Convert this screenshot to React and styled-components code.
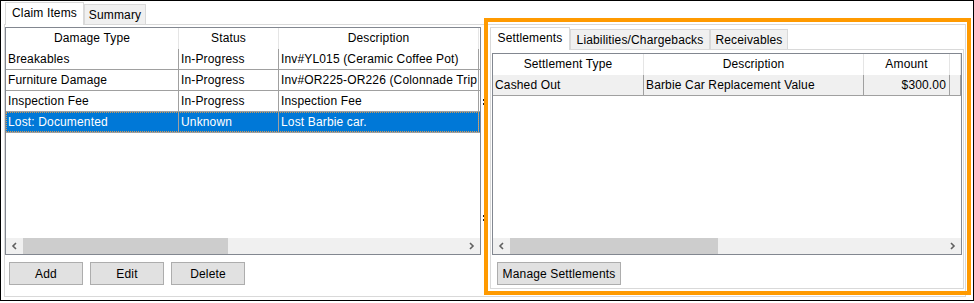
import React from "react";
import styled, { createGlobalStyle } from "styled-components";

const GlobalStyle = createGlobalStyle`
  html, body {
    margin: 0;
    padding: 0;
    background: #fff;
  }
  body {
    font-family: "Liberation Sans", Arial, sans-serif;
    font-size: 12px;
    letter-spacing: 0.15px;
    color: #000;
  }
  * {
    box-sizing: border-box;
  }
`;

const Frame = styled.div`
  width: 974px;
  height: 301px;
  border: 1px solid #000;
  padding: 0 7px 0 3px;
  background: #fff;
`;

const TabStrip = styled.div`
  display: flex;
  align-items: flex-end;
  height: ${(p) => p.$h}px;
  padding-left: ${(p) => p.$pl}px;
`;

const Tab = styled.div`
  position: relative;
  z-index: ${(p) => (p.$active ? 2 : 1)};
  width: ${(p) => p.$w}px;
  height: ${(p) => (p.$active ? 23 : 20)}px;
  margin-bottom: ${(p) => (p.$active ? -1 : 0)}px;
  padding: ${(p) => (p.$active ? "0 0 2px" : "1px 0 0")};
  display: flex;
  align-items: center;
  justify-content: center;
  border: 1px solid #d9d9d9;
  border-bottom: none;
  background: ${(p) => (p.$active ? "#fff" : "#f0f0f0")};
  white-space: nowrap;
`;

const TabPanel = styled.div`
  height: 273px;
  border: 1px solid #d9d9d9;
  display: flex;
`;

const LeftPane = styled.div`
  width: 476px;
  padding-top: 2px;
  display: flex;
  flex-direction: column;
`;

const Splitter = styled.div`
  width: 7px;
  padding-left: 2px;
  display: flex;
  flex-direction: column;
`;

const Grip = styled.div`
  width: 2px;
  height: 6px;
  margin-top: ${(p) => p.$mt}px;
  background: linear-gradient(#222 0 2px, transparent 2px 4px, #222 4px 6px);
`;

const RightPane = styled.div`
  position: relative;
  width: 477px;
  padding-top: 2px;
  display: flex;
  flex-direction: column;
`;

const Highlight = styled.div`
  position: absolute;
  top: -7px;
  left: -4px;
  right: -6px;
  bottom: 1px;
  border: 4px solid #ff9a00;
  pointer-events: none;
  z-index: 5;
`;

const InnerPanel = styled.div`
  margin-left: 2px;
  width: 474px;
  height: 240px;
  border: 1px solid #d9d9d9;
  padding: 3px 0 0 1px;
  display: flex;
  flex-direction: column;
`;

const Table = styled.div`
  width: ${(p) => p.$w}px;
  height: ${(p) => p.$h}px;
  border: 1px solid #828790;
  display: flex;
  flex-direction: column;
  overflow: hidden;
  background: #fff;
`;

const HeaderRow = styled.div`
  display: flex;
  height: 21px;
  flex-shrink: 0;
`;

const HeadCell = styled.div`
  width: ${(p) => p.$w}px;
  flex-shrink: 0;
  border-right: 1px solid #e5e5e5;
  text-align: center;
  line-height: 21px;
  white-space: nowrap;
  overflow: hidden;
`;

const Row = styled.div`
  display: flex;
  height: 21px;
  flex-shrink: 0;
  border-bottom: 1px solid #a0a0a0;
  background: ${(p) => p.$bg || "transparent"};
`;

const SelectedRow = styled(Row)`
  color: #fff;
  position: relative;

  &::after {
    content: "";
    position: absolute;
    inset: 0 1px 0 0;
    border: 1px dotted #d09a55;
    pointer-events: none;
  }
`;

const Cell = styled.div`
  width: ${(p) => p.$w}px;
  flex-shrink: 0;
  border-right: 1px solid #a0a0a0;
  padding: ${(p) => (p.$right ? "0 3px 0 0" : "0 0 0 2px")};
  text-align: ${(p) => (p.$right ? "right" : "left")};
  line-height: 20px;
  white-space: nowrap;
  overflow: hidden;
`;

const Spacer = styled.div`
  flex: 1;
`;

const ScrollBar = styled.div`
  display: flex;
  height: 16px;
  flex-shrink: 0;
  background: #f0f0f0;
`;

const ArrowBtn = styled.div`
  width: 17px;
  height: 16px;
  flex-shrink: 0;
  display: flex;
  align-items: center;
  justify-content: center;
`;

const Thumb = styled.div`
  width: ${(p) => p.$w}px;
  height: 16px;
  background: #cdcdcd;
`;

const ButtonRow = styled.div`
  display: flex;
  gap: 7px;
  margin-top: 7px;
  padding-left: ${(p) => p.$pl}px;
`;

const Button = styled.button`
  width: ${(p) => p.$w}px;
  height: 23px;
  padding: 0;
  background: #e1e1e1;
  border: 1px solid #adadad;
  font-family: "Liberation Sans", Arial, sans-serif;
  font-size: 12px;
  letter-spacing: 0.15px;
  color: #000;
`;

const Chevron = ({ dir }) => (
  <svg width="7" height="8" viewBox="0 0 7 8">
    <polyline
      points={dir === "left" ? "5,1 2,4 5,7" : "2,1 5,4 2,7"}
      fill="none"
      stroke="#606060"
      strokeWidth="1.6"
    />
  </svg>
);

const HScroll = ({ thumb }) => (
  <ScrollBar>
    <ArrowBtn>
      <Chevron dir="left" />
    </ArrowBtn>
    <Thumb $w={thumb} />
    <Spacer />
    <ArrowBtn>
      <Chevron dir="right" />
    </ArrowBtn>
  </ScrollBar>
);

const claimCols = [173, 100, 200];
const claimHead = ["Damage Type", "Status", "Description"];
const claimRows = [
  ["Breakables", "In-Progress", "Inv#YL015 (Ceramic Coffee Pot)"],
  ["Furniture Damage", "In-Progress", "Inv#OR225-OR226 (Colonnade Trip Table)"],
  ["Inspection Fee", "In-Progress", "Inspection Fee"],
];
const selectedClaim = ["Lost: Documented", "Unknown", "Lost Barbie car."];

const settleCols = [151, 220, 86, 11];
const settleHead = ["Settlement Type", "Description", "Amount", ""];

export default function App() {
  return (
    <>
      <GlobalStyle />
      <Frame>
        <TabStrip $h={23} $pl={1}>
          <Tab $active $w={79}>Claim Items</Tab>
          <Tab $w={62}>Summary</Tab>
        </TabStrip>
        <TabPanel>
          <LeftPane>
            <Table $w={476} $h={228}>
              <HeaderRow>
                {claimHead.map((h, i) => (
                  <HeadCell key={h} $w={claimCols[i]}>
                    {h}
                  </HeadCell>
                ))}
              </HeaderRow>
              {claimRows.map((r) => (
                <Row key={r[0]}>
                  {r.map((c, i) => (
                    <Cell key={i} $w={claimCols[i]}>
                      {c}
                    </Cell>
                  ))}
                </Row>
              ))}
              <SelectedRow $bg="#0078d7">
                {selectedClaim.map((c, i) => (
                  <Cell key={i} $w={claimCols[i]}>
                    {c}
                  </Cell>
                ))}
              </SelectedRow>
              <Spacer />
              <HScroll thumb={205} />
            </Table>
            <ButtonRow $pl={4}>
              <Button $w={74}>Add</Button>
              <Button $w={74}>Edit</Button>
              <Button $w={74}>Delete</Button>
            </ButtonRow>
          </LeftPane>

          <Splitter>
            <Grip $mt={74} />
            <Grip $mt={110} />
          </Splitter>

          <RightPane>
            <Highlight />
            <TabStrip $h={22} $pl={2}>
              <Tab $active $w={80}>Settlements</Tab>
              <Tab $w={140}>Liabilities/Chargebacks</Tab>
              <Tab $w={78}>Receivables</Tab>
            </TabStrip>
            <InnerPanel>
              <Table $w={470} $h={202}>
                <HeaderRow>
                  {settleHead.map((h, i) => (
                    <HeadCell key={i} $w={settleCols[i]}>
                      {h}
                    </HeadCell>
                  ))}
                </HeaderRow>
                <Row $bg="#f0f0f0">
                  <Cell $w={settleCols[0]}>Cashed Out</Cell>
                  <Cell $w={settleCols[1]}>Barbie Car Replacement Value</Cell>
                  <Cell $w={settleCols[2]} $right>
                    $300.00
                  </Cell>
                  <Cell $w={settleCols[3]} />
                </Row>
                <Spacer />
                <HScroll thumb={208} />
              </Table>
              <ButtonRow $pl={5}>
                <Button $w={124}>Manage Settlements</Button>
              </ButtonRow>
            </InnerPanel>
          </RightPane>
        </TabPanel>
      </Frame>
    </>
  );
}
